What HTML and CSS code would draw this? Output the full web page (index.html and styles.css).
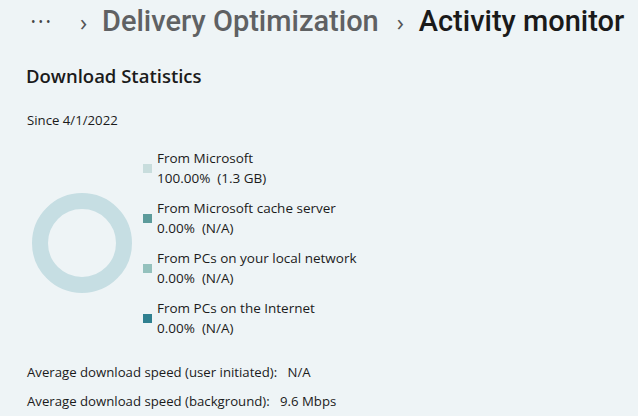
FILE: index.html
```html
<!DOCTYPE html>
<html>
<head>
<meta charset="utf-8">
<link rel="stylesheet" href="styles.css">
</head>
<body>
<div class="page">
  <div class="breadcrumb">
    <span class="more">•••</span>
    <span class="chev">›</span>
    <span class="crumb">Delivery Optimization</span>
    <span class="chev">›</span>
    <span class="current">Activity monitor</span>
  </div>
  <h2 class="title">Download Statistics</h2>
  <div class="since">Since 4/1/2022</div>
  <div class="chart">
    <div class="donut-wrap">
      <svg class="donut" width="102" height="102" viewBox="0 0 102 102">
        <circle cx="51" cy="51" r="42" fill="none" stroke="#c6dee3" stroke-width="16"/>
      </svg>
    </div>
    <ul class="legend">
      <li class="item"><span class="swatch sw1"></span><div class="text"><div>From Microsoft</div><div>100.00%&nbsp;&nbsp;(1.3 GB)</div></div></li>
      <li class="item"><span class="swatch sw2"></span><div class="text"><div>From Microsoft cache server</div><div>0.00%&nbsp;&nbsp;(N/A)</div></div></li>
      <li class="item"><span class="swatch sw3"></span><div class="text"><div>From PCs on your local network</div><div>0.00%&nbsp;&nbsp;(N/A)</div></div></li>
      <li class="item"><span class="swatch sw4"></span><div class="text"><div>From PCs on the Internet</div><div>0.00%&nbsp;&nbsp;(N/A)</div></div></li>
    </ul>
  </div>
  <div class="speeds">
    <div class="speed">Average download speed (user initiated):&nbsp;&nbsp; N/A</div>
    <div class="speed">Average download speed (background):&nbsp;&nbsp; 9.6 Mbps</div>
  </div>
</div>
</body>
</html>
```

FILE: styles.css
```css
html, body {
  margin: 0;
  padding: 0;
  background: #eef4f6;
}
body {
  font-family: "Open Sans", "Noto Sans", sans-serif;
  color: #1b1b1b;
  width: 638px;
  height: 416px;
  overflow: hidden;
}
.page {
  padding: 3px 0 0 27px;
}
.breadcrumb {
  display: flex;
  align-items: center;
  height: 36px;
  font-family: Roboto, "Open Sans", sans-serif;
  font-size: 29px;
  font-weight: 500;
  white-space: nowrap;
}
.more {
  font-family: "Open Sans", sans-serif;
  font-size: 12px;
  letter-spacing: 3px;
  color: #444;
  margin-left: 4px;
  width: 49px;
}
.chev {
  font-family: "Open Sans", sans-serif;
  font-size: 24px;
  font-weight: 400;
  color: #555;
  width: 22px;
}
.crumb {
  color: #5f6163;
  margin-right: 18px;
}
.current {
  color: #1a1a1a;
}
.title {
  margin: 25px 0 0 -1px;
  font-size: 18.5px;
  font-weight: 600;
  line-height: 24px;
}
.since {
  margin-top: 23px;
  font-size: 13.2px;
  line-height: 18px;
}
.chart {
  display: flex;
  align-items: center;
  margin-top: 14px;
}
.donut-wrap {
  width: 112px;
  padding-left: 4px;
}
.donut { display: block; }
.legend {
  list-style: none;
  margin: 0;
  padding: 0;
}
.item {
  display: flex;
  align-items: center;
  height: 50px;
}
.swatch {
  width: 9px;
  height: 9px;
  margin-right: 5px;
}
.sw1 { background: #c8dddd; }
.sw2 { background: #5c9b9b; }
.sw3 { background: #94c1bd; }
.sw4 { background: #2f8090; }
.text {
  font-size: 13.5px;
  line-height: 20px;
}
.speeds {
  margin-top: 15px;
}
.speed {
  font-size: 13.2px;
  line-height: 29px;
}
```
